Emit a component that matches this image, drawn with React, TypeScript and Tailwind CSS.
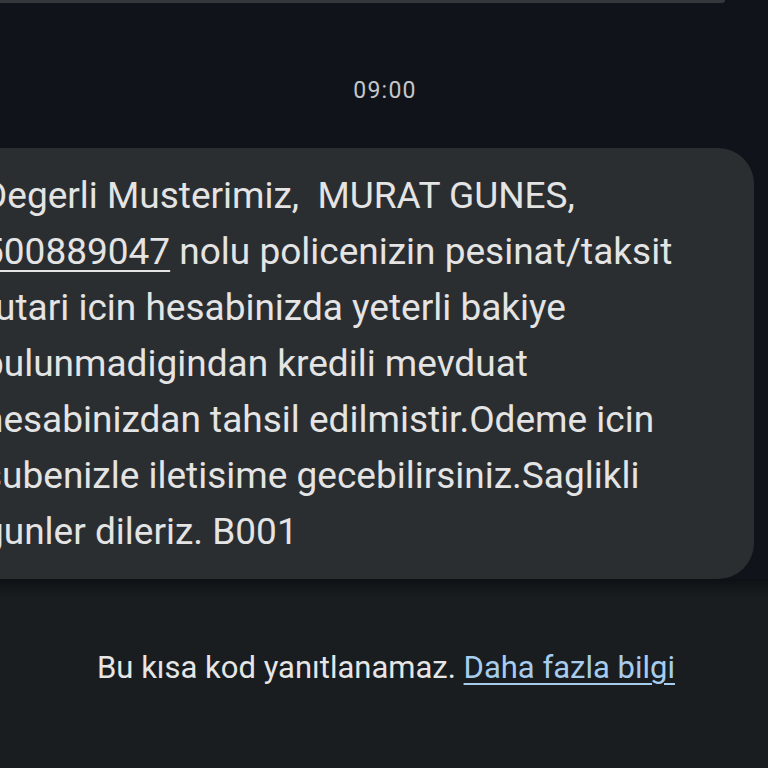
import React from "react";

const lines: React.ReactNode[] = [
  <>Degerli Musterimiz,&nbsp; MURAT GUNES,</>,
  <>
    <span className="underline decoration-2 underline-offset-[6px]">500889047</span> nolu policenizin pesinat/taksit
  </>,
  <>tutari icin hesabinizda yeterli bakiye</>,
  <>bulunmadigindan kredili mevduat</>,
  <>hesabinizdan tahsil edilmistir.Odeme icin</>,
  <>subenizle iletisime gecebilirsiniz.Saglikli</>,
  <>gunler dileriz. B001</>,
];

export default function App() {
  return (
    <div className="w-[768px] h-[768px] overflow-hidden bg-[#10141a] flex flex-col font-['Roboto',sans-serif]">
      <div className="h-[3px] w-[725px] shrink-0 bg-[#34373b] rounded-br-[3px]" />
      <div className="pt-[77px] h-[102px] shrink-0 flex justify-center">
        <span className="text-[23px] leading-[22px] tracking-[1.2px] text-[#c4c7ca] ml-[2px]">09:00</span>
      </div>
      <div className="mt-[43px] ml-[-60px] w-[814px] shrink-0 rounded-[36px] bg-[#2b2e31] pt-[20px] pb-[19px] pl-[43px] text-[37px] leading-[56px] text-[#e4e4e4] whitespace-nowrap">
        {lines.map((l, i) => (
          <div key={i}>{l}</div>
        ))}
      </div>
      <div className="h-[18px] shrink-0 bg-gradient-to-b from-[#0d1115] to-[#1a1d20]" />
      <div className="flex-1 bg-[#1a1d20] pt-[53px] flex justify-center">
        <p className="text-[31px] leading-[36px] text-[#e6e6e6] whitespace-nowrap ml-[4px]">
          Bu kısa kod yanıtlanamaz.{" "}
          <span className="text-[#a6cdee] underline decoration-2 underline-offset-[5px]">Daha fazla bilgi</span>
        </p>
      </div>
    </div>
  );
}
